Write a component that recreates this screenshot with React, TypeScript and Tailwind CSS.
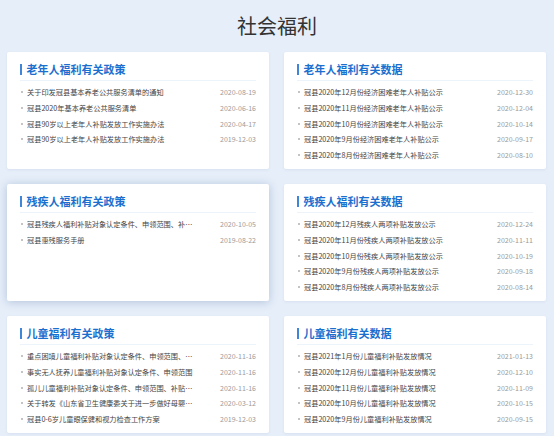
type Item = { title: string; date: string };

type Section = { heading: string; items: Item[]; active?: boolean };

const sections: Section[] = [
  {
    heading: "老年人福利有关政策",
    items: [
      { title: "关于印发冠县基本养老公共服务清单的通知", date: "2020-08-19" },
      { title: "冠县2020年基本养老公共服务清单", date: "2020-06-16" },
      { title: "冠县90岁以上老年人补贴发放工作实施办法", date: "2020-04-17" },
      { title: "冠县90岁以上老年人补贴发放工作实施办法", date: "2019-12-03" },
    ],
  },
  {
    heading: "老年人福利有关数据",
    items: [
      { title: "冠县2020年12月份经济困难老年人补贴公示", date: "2020-12-30" },
      { title: "冠县2020年11月份经济困难老年人补贴公示", date: "2020-12-04" },
      { title: "冠县2020年10月份经济困难老年人补贴公示", date: "2020-10-14" },
      { title: "冠县2020年9月份经济困难老年人补贴公示", date: "2020-09-17" },
      { title: "冠县2020年8月份经济困难老年人补贴公示", date: "2020-08-10" },
    ],
  },
  {
    heading: "残疾人福利有关政策",
    active: true,
    items: [
      { title: "冠县残疾人福利补贴对象认定条件、申领范围、补贴标准及发放程序", date: "2020-10-05" },
      { title: "冠县惠残服务手册", date: "2019-08-22" },
    ],
  },
  {
    heading: "残疾人福利有关数据",
    items: [
      { title: "冠县2020年12月残疾人两项补贴发放公示", date: "2020-12-24" },
      { title: "冠县2020年11月份残疾人两项补贴发放公示", date: "2020-11-11" },
      { title: "冠县2020年10月份残疾人两项补贴发放公示", date: "2020-10-19" },
      { title: "冠县2020年9月份残疾人两项补贴发放公示", date: "2020-09-18" },
      { title: "冠县2020年8月份残疾人两项补贴发放公示", date: "2020-08-14" },
    ],
  },
  {
    heading: "儿童福利有关政策",
    items: [
      { title: "重点困境儿童福利补贴对象认定条件、申领范围、补贴标准", date: "2020-11-16" },
      { title: "事实无人抚养儿童福利补贴对象认定条件、申领范围", date: "2020-11-16" },
      { title: "孤儿儿童福利补贴对象认定条件、申领范围、补贴标准", date: "2020-11-16" },
      { title: "关于转发《山东省卫生健康委关于进一步做好母婴安全保障工作的通知》", date: "2020-03-12" },
      { title: "冠县0-6岁儿童眼保健和视力检查工作方案", date: "2019-12-03" },
    ],
  },
  {
    heading: "儿童福利有关数据",
    items: [
      { title: "冠县2021年1月份儿童福利补贴发放情况", date: "2021-01-13" },
      { title: "冠县2020年12月份儿童福利补贴发放情况", date: "2020-12-10" },
      { title: "冠县2020年11月份儿童福利补贴发放情况", date: "2020-11-09" },
      { title: "冠县2020年10月份儿童福利补贴发放情况", date: "2020-10-15" },
      { title: "冠县2020年9月份儿童福利补贴发放情况", date: "2020-09-15" },
    ],
  },
];

function Card({ heading, items, active }: Section) {
  return (
    <div
      className={
        active
          ? "h-[117px] bg-white rounded-[2px] px-[13px] pt-[10px] shadow-[0_1px_10px_rgba(40,80,140,0.28)]"
          : "h-[117px] bg-white rounded-[2px] px-[13px] pt-[10px] shadow-[0_1px_3px_rgba(40,80,140,0.08)]"
      }
    >
      <div className="h-[14px] flex items-center">
        <span className="w-[1.5px] h-[11px] bg-[#3f86d8] mr-[5px]" />
        <span className="text-[11px] font-bold text-[#1b6fcf] leading-[14px]">{heading}</span>
      </div>
      <div className="mt-[4px] border-t border-[#edf3fb]" />
      <ul className="pt-[3.5px]">
        {items.map((it, i) => (
          <li key={i} className="h-[15.7px] flex items-center">
            <span className="w-[2px] h-[2px] rounded-full bg-[#b0b0b0] ml-[1px] mr-[4px] shrink-0" />
            <span className="w-[166px] truncate text-[7.2px] text-[#444] leading-[12px]">{it.title}</span>
            <span className="ml-auto text-[7px] text-[#9a9a9a] leading-[12px]">{it.date}</span>
          </li>
        ))}
      </ul>
    </div>
  );
}

export default function App() {
  return (
    <div className="min-h-screen bg-[#e6eef9] font-['Noto_Sans_CJK_SC',sans-serif]">
      <h1 className="h-[52px] flex items-center justify-center text-[20px] text-[#333] font-normal">
        社会福利
      </h1>
      <div className="grid grid-cols-2 gap-x-[15px] gap-y-[15px] pl-[7px] pr-[8px]">
        {sections.map((s) => (
          <Card key={s.heading} {...s} />
        ))}
      </div>
    </div>
  );
}
